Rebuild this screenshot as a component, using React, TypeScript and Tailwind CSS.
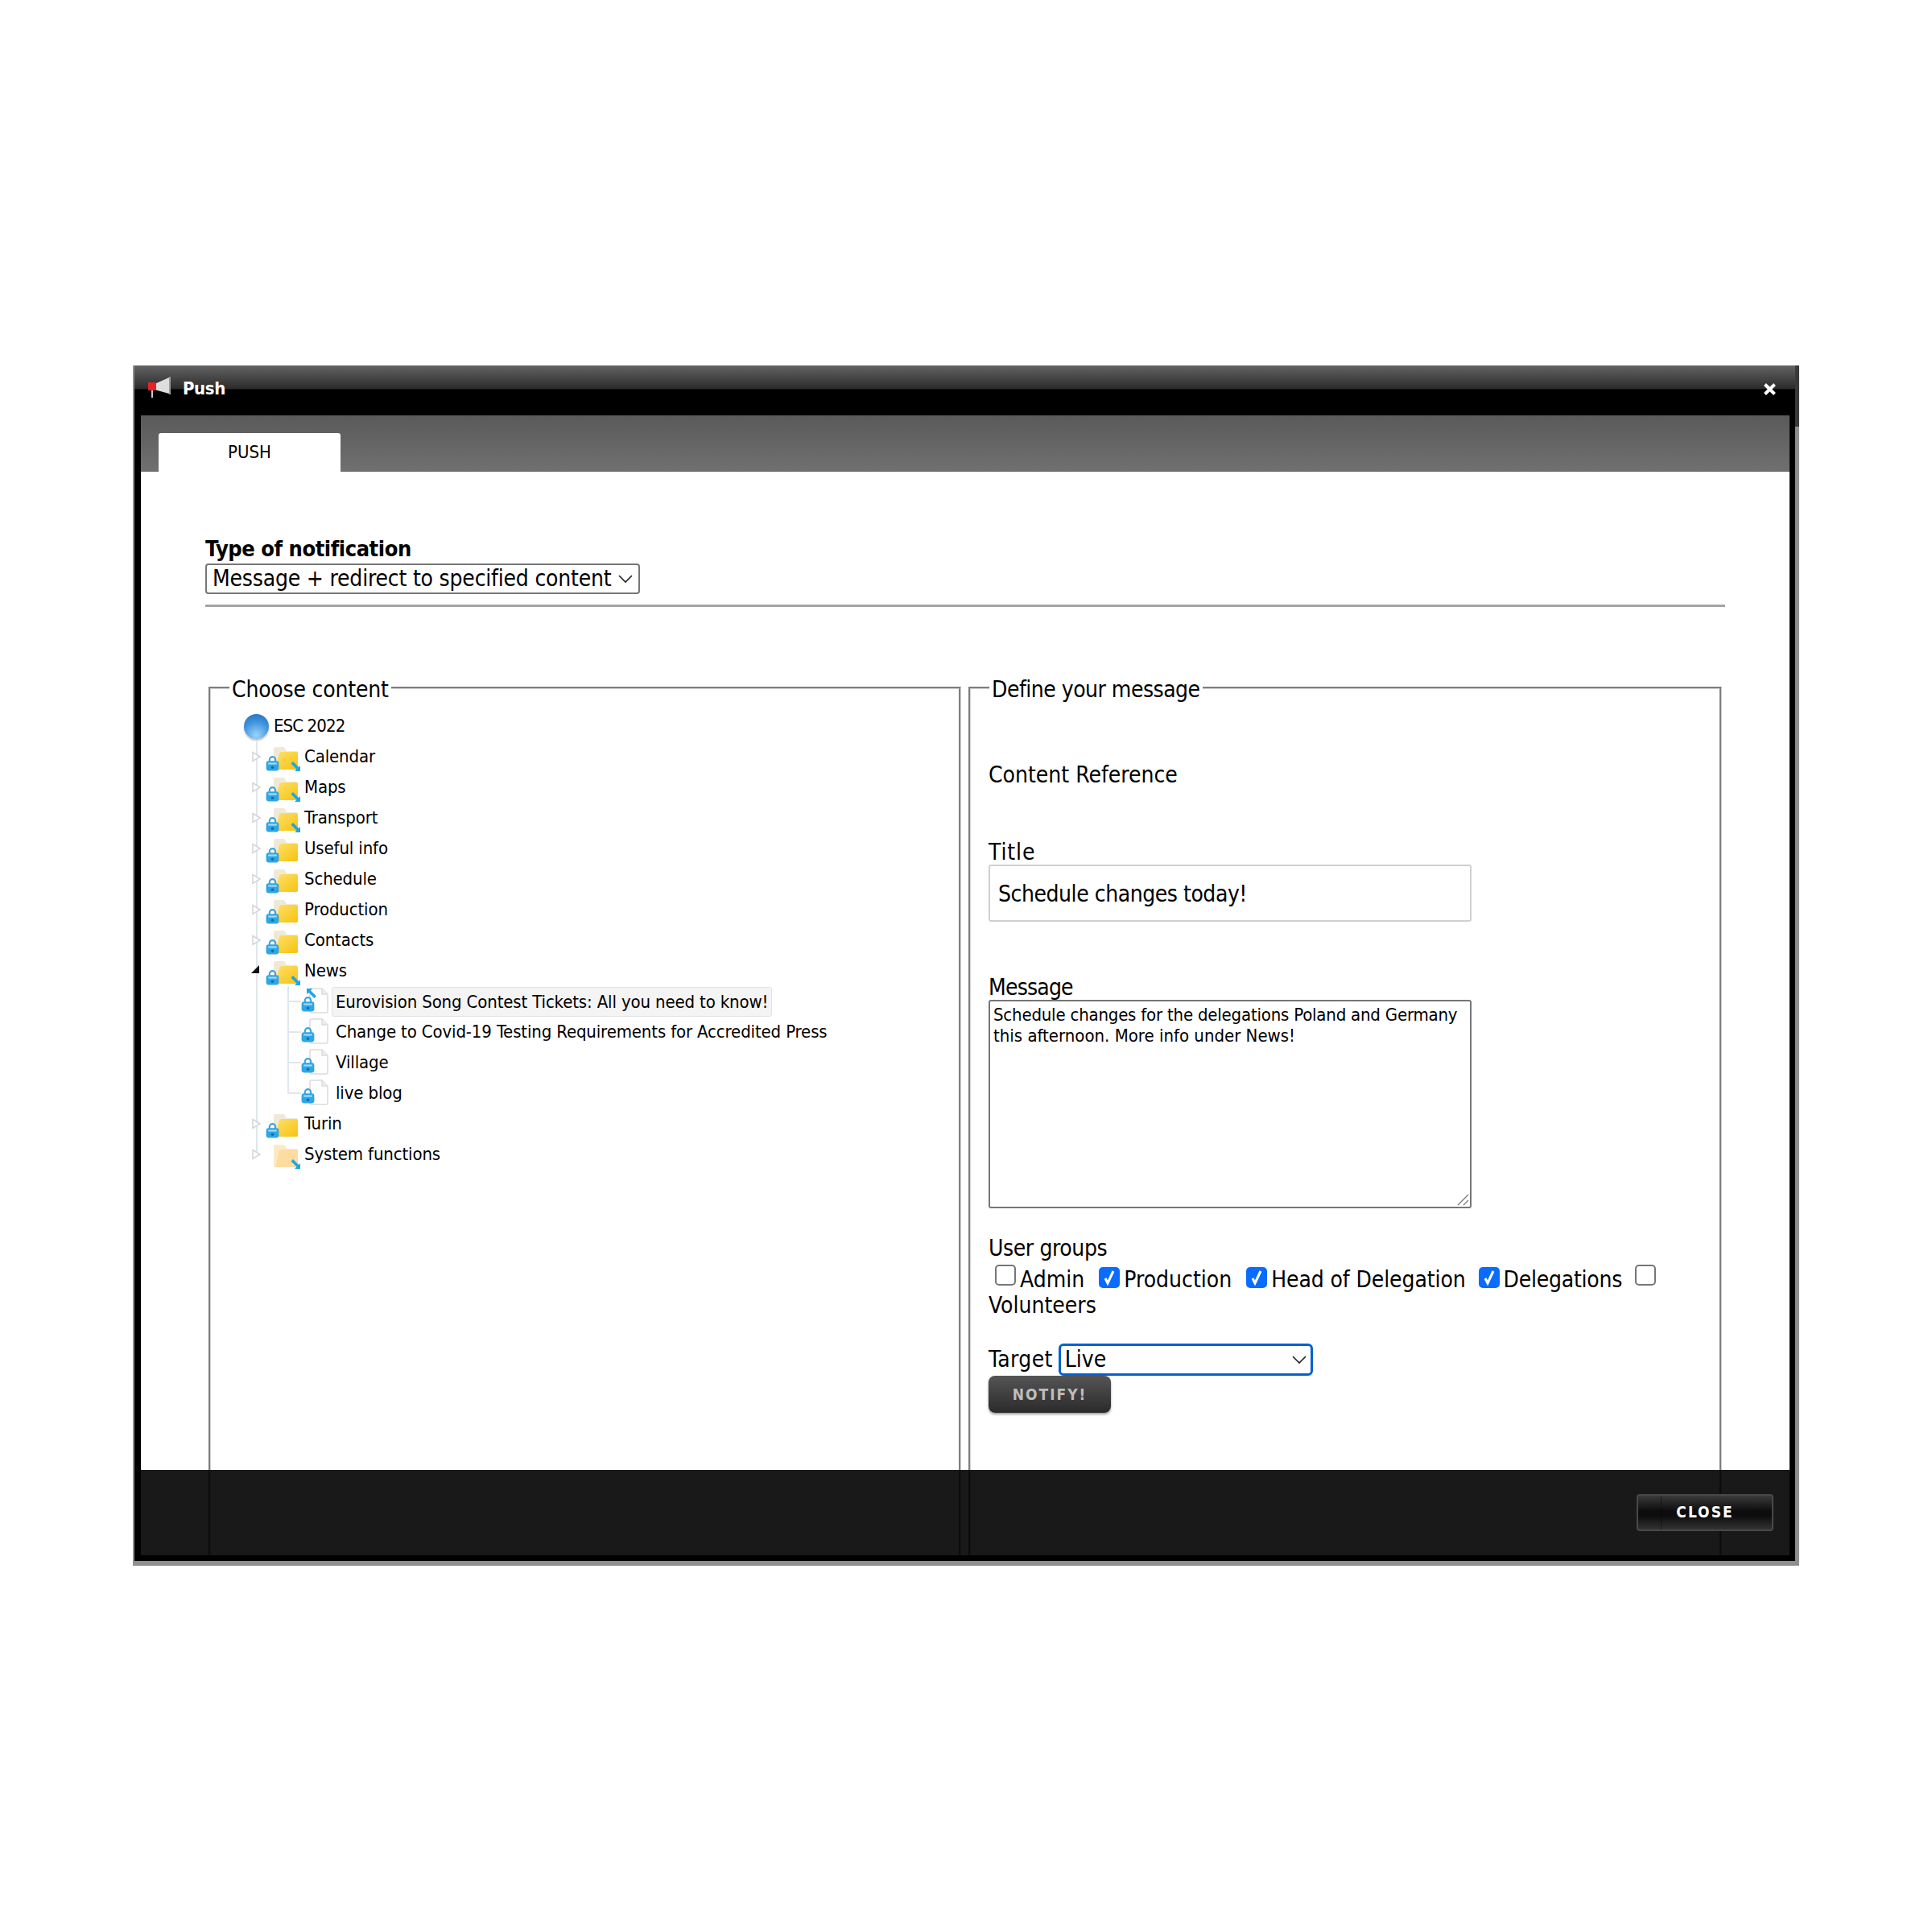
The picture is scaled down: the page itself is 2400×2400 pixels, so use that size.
const FONT = "font-['DejaVu_Sans_Condensed','DejaVu_Sans',sans-serif]"

function Lock({ bottom }: { bottom: string }) {
  return (
    <svg className={`absolute left-0 ${bottom}`} width="17" height="20" viewBox="0 0 16 19">
      <path d="M4.5 8V5.5a3.5 3.5 0 0 1 7 0V8" fill="none" stroke="#3aa4dc" strokeWidth="2" />
      <rect x="0.5" y="7" width="15" height="11.5" rx="3" fill="#2ea6e6" />
      <rect x="3" y="9" width="10" height="2" fill="#a5dcf7" />
      <circle cx="8" cy="14.5" r="1.7" fill="#0d6fa8" />
    </svg>
  )
}

function Arrow({ up }: { up?: boolean }) {
  return (
    <svg className={up ? 'absolute left-[6px] top-[2px]' : 'absolute left-[30px] bottom-0'} width="14" height="14" viewBox="0 0 14 14">
      {up
        ? <path d="M1 1h7L6 3.5l7 7-2.5 2.5-7-7L1 8z" fill="#19a7ea" />
        : <path d="M13 13H6l2.500-2.500-7-7L4 1l7 7 2-2z" fill="#19a7ea" />}
    </svg>
  )
}

function Folder({ lock = true, arrow, pale }: { lock?: boolean; arrow?: boolean; pale?: boolean }) {
  return (
    <span className="relative block w-[48px] h-[38px] shrink-0">
      <svg className="absolute left-[9px] top-[6px]" width="32" height="30" viewBox="0 0 32 30">
        <defs>
          <linearGradient id="fy" x1="0" y1="0" x2="1" y2="1">
            <stop offset="0" stopColor="#ffe06a" />
            <stop offset="1" stopColor="#f6c312" />
          </linearGradient>
        </defs>
        <path d="M1 8V3a2 2 0 0 1 2-2h11l3 5h12a2 2 0 0 1 2 2v19a2 2 0 0 1-2 2H3a2 2 0 0 1-2-2z" fill={pale ? '#fde9c6' : '#efe9d6'} />
        <path d="M3 29 8 9q.5-2 3-2h18a2 2 0 0 1 2 2v18a2 2 0 0 1-2 2z" fill={pale ? '#fcdca0' : 'url(#fy)'} />
      </svg>
      {lock && <Lock bottom="bottom-[1px]" />}
      {arrow && <Arrow />}
    </span>
  )
}

function Page({ arrow }: { arrow?: boolean }) {
  return (
    <span className="relative block w-[38px] h-[38px] shrink-0">
      <svg className="absolute left-[10px] top-[2px]" width="24" height="32" viewBox="0 0 24 32">
        <path d="M2 1h14l7 7v21a2 2 0 0 1-2 2H3a2 2 0 0 1-2-2V2z" fill="#fff" stroke="#dcdcdc" strokeWidth="1.5" />
        <path d="M16 1v7h7" fill="#eee" stroke="#dcdcdc" strokeWidth="1.5" />
      </svg>
      <Lock bottom="bottom-[6px]" />
      {arrow && <Arrow up />}
    </span>
  )
}

function Expander({ open }: { open?: boolean }) {
  return (
    <svg className="absolute left-[-18px] top-[12px]" width="14" height="14" viewBox="0 0 14 14">
      {open
        ? <path d="M0 10 10 0v10z" fill="#111" />
        : <path d="M2 1.500 11 7l-9 5.500z" fill="#fff" stroke="#cfd6da" strokeWidth="1.5" />}
    </svg>
  )
}

const FOLDERS = [
  { name: 'Calendar', arrow: true },
  { name: 'Maps', arrow: true },
  { name: 'Transport', arrow: true },
  { name: 'Useful info' },
  { name: 'Schedule' },
  { name: 'Production' },
  { name: 'Contacts' },
]

const NEWS = [
  'Eurovision Song Contest Tickets: All you need to know!',
  'Change to Covid-19 Testing Requirements for Accredited Press',
  'Village',
  'live blog',
]

function Tree() {
  return (
    <div className="ml-[19px] mt-[10px] text-[22px] leading-[38px] tracking-[-0.14px] text-black">
      <div className="flex items-center h-[38px]">
        <span className="block w-[31px] h-[31px] rounded-full bg-[radial-gradient(circle_at_50%_85%,#9ad4fa,#3f93dd_55%,#1f6cbc)] shadow-[0_2px_2px_rgba(0,0,0,.25)] shrink-0" />
        <span className="ml-[6px] tracking-[-0.9px]">ESC 2022</span>
      </div>
      <div className="ml-[15px] border-l-2 border-[#e1e7ea] pl-[10px] h-[513px]">
        {FOLDERS.map(f => (
          <div key={f.name} className="relative flex items-center h-[38px]">
            <Expander />
            <Folder arrow={f.arrow} />
            <span>{f.name}</span>
          </div>
        ))}
        <div className="relative flex items-center h-[38px]">
          <Expander open />
          <Folder arrow />
          <span>News</span>
        </div>
        {NEWS.map((n, i) => (
          <div key={n} className="relative flex items-center h-[38px] ml-[27px] pl-[17px]">
            <span className={i === 3 ? 'absolute left-0 top-0 w-[2px] h-[20px] bg-[#e1e7ea]' : 'absolute left-0 top-0 w-[2px] h-[38px] bg-[#e1e7ea]'} />
            <span className="absolute left-0 top-[18px] w-[17px] h-[2px] bg-[#e1e7ea]" />
            <Page arrow={i === 0} />
            <span className={i === 0 ? 'px-[4px] h-[37px] leading-[35px] bg-[#f4f4f4] border border-[#e3e3e3] rounded-[3px]' : 'ml-[1px] px-[4px]'}>{n}</span>
          </div>
        ))}
        <div className="relative flex items-center h-[38px]">
          <Expander />
          <Folder />
          <span>Turin</span>
        </div>
        <div className="relative flex items-center h-[38px]">
          <Expander />
          <Folder lock={false} arrow pale />
          <span>System functions</span>
        </div>
      </div>
    </div>
  )
}

function Check({ on }: { on?: boolean }) {
  return on ? (
    <span className="inline-flex items-center justify-center w-[26px] h-[26px] rounded-[5px] bg-[#0a6cff] align-[2px]">
      <svg width="18" height="20" viewBox="0 0 18 20"><path d="M4 11l3 6 7-15" fill="none" stroke="#fff" strokeWidth="3" /></svg>
    </span>
  ) : (
    <span className="inline-block w-[26px] h-[26px] rounded-[5px] border-2 border-[#767676] bg-white align-[2px]" />
  )
}

function Group({ label, on, gap, track }: { label: string; on?: boolean; gap: string; track?: string }) {
  return (
    <>
      <span className={gap}><Check on={on} /></span>
      <span className={`ml-[5px] ${track ?? ''}`}>{label}</span>{' '}
    </>
  )
}

export default function App() {
  return (
    <div className={`${FONT} h-[2400px] bg-white pt-[454px] pl-[165px]`}>
      <div className="relative w-[2070px] h-[1491px] bg-black border-l-[2px] border-r-[5px] border-b-[6px] border-[#8f8f8f]">
        {/* Top of the right edge is darker */}
        <div className="absolute right-[-5px] top-0 w-[5px] h-[76px] bg-[#3a3a3a]" />

        {/* Title bar */}
        <div className="h-[62px] bg-[linear-gradient(#636363,#2b2b2b_47%,#000_48%)] flex items-start pt-[14px] pl-[16px] pr-[24px]">
          <svg width="30" height="28" viewBox="0 0 30 28">
            <path d="M9 9 27 1v20L9 16z" fill="#dedede" />
            <path d="M27 0h2v22h-2z" fill="#9a9a9a" />
            <rect x="1" y="7" width="10" height="10" rx="1" fill="#e2232a" />
            <path d="M6 17v9" stroke="#ccc" strokeWidth="2" />
          </svg>
          <span className="ml-[14px] text-[22px] leading-[30px] font-bold tracking-[-0.4px] text-white">Push</span>
          <svg className="ml-auto mt-[8px]" width="15" height="15" viewBox="0 0 15 15">
            <path d="M1.500 1.500l12 12M13.500 1.500l-12 12" stroke="#fff" strokeWidth="4" />
          </svg>
        </div>

        <div className="relative ml-[8px] mr-[7px] h-[1423px] bg-white overflow-hidden">
          {/* Tab strip */}
          <div className="h-[70px] bg-[linear-gradient(#5a5a5a,#707070)] pt-[22px] pl-[22px]">
            <div className="w-[226px] h-[48px] bg-white rounded-t-[3px] text-center text-[22px] leading-[48px] text-black">PUSH</div>
          </div>

          <div className="px-[80px] pt-[80px]">
            <div className="text-[27px] leading-[32px] font-bold tracking-[-0.45px] text-black">Type of notification</div>
            <div className="flex items-center w-[540px] h-[38px] mt-[2px] border-2 border-[#767676] rounded-[4px] px-[7px] text-[28px] tracking-[-0.2px] text-black">
              Message + redirect to specified content
              <svg className="ml-auto" width="18" height="12" viewBox="0 0 18 12"><path d="M1 2l8 8 8-8" fill="none" stroke="#222" strokeWidth="1.6" /></svg>
            </div>
            <div className="h-[3px] mt-[13px] w-[1888px] bg-[#a3a3a3]" />

            <div className="flex gap-[9px] mt-[81px] ml-[4px]">
              <fieldset className="w-[935px] h-[1100px] border-[3px] [border-style:groove] border-[#d2d2d2] pl-[22px]">
                <legend className="ml-[1px] px-[3px] pt-[6px] text-[28px] leading-[32px] tracking-[-0.2px] text-black">Choose content</legend>
                <Tree />
              </fieldset>

              <fieldset className="w-[936px] h-[1100px] border-[3px] [border-style:groove] border-[#d2d2d2] pl-[22px] text-[28px] text-black">
                <legend className="ml-[1px] px-[3px] pt-[6px] leading-[32px] tracking-[-0.5px]">Define your message</legend>
                <div className="mt-[74px] leading-[32px]">Content Reference</div>
                <div className="mt-[64px] leading-[32px] tracking-[0.9px]">Title</div>
                <div className="w-[600px] h-[71px] border-2 border-[#d0d0d0] rounded-[3px] px-[10px] leading-[70px] tracking-[-0.45px] -mt-[1px]">Schedule changes today!</div>
                <div className="mt-[66px] leading-[32px] tracking-[-0.8px]">Message</div>
                <div className="relative w-[600px] h-[259px] border-2 border-[#767676] rounded-[3px] px-[4px] py-[4px] text-[22px] leading-[26px] tracking-[-0.2px] -mt-[1px]">
                  Schedule changes for the delegations Poland and Germany<br /><span className="tracking-[0px]">this afternoon. More info under News!</span>
                  <svg className="absolute right-[1px] bottom-[1px]" width="16" height="16" viewBox="0 0 16 16"><path d="M2 15 15 2M9 15l6-6" stroke="#777" strokeWidth="1.3" /></svg>
                </div>
                <div className="mt-[34px] leading-[32px] tracking-[-0.4px]">User groups</div>
                <div className="leading-[32px] w-[860px] pt-[4px]">
                  <Group label="Admin" gap="ml-[8px]" />
                  <Group label="Production" on gap="ml-[10px]" />
                  <Group label="Head of Delegation" on gap="ml-[10px]" track="tracking-[-0.1px]" />
                  <Group label="Delegations" on gap="ml-[8px]" track="tracking-[-0.25px]" />
                  <span className="ml-[8px]"><Check /></span> Volunteers
                </div>
                <div className="flex items-center mt-[31px] h-[40px]">
                  <span className="tracking-[0.4px]">Target</span>
                  <div className="flex items-center ml-[7px] w-[316px] h-[40px] border-[3px] border-[#0561d1] rounded-[6px] px-[5px]">
                    Live
                    <svg className="ml-auto" width="18" height="12" viewBox="0 0 18 12"><path d="M1 2l8 8 8-8" fill="none" stroke="#222" strokeWidth="1.6" /></svg>
                  </div>
                </div>
                <div className="w-[152px] h-[46px] rounded-[8px] bg-[linear-gradient(#555,#2a2a2a)] shadow-[0_2px_3px_rgba(0,0,0,.4)] text-center text-[19px] leading-[46px] font-bold tracking-[2px] text-[#bdbdbd]">NOTIFY!</div>
              </fieldset>
            </div>
          </div>

          {/* Footer sits over the fieldsets, their lines show through */}
          <div className="absolute left-0 right-0 bottom-[7px] h-[106px] bg-black/90 flex items-start justify-end pt-[30px] pr-[20px]">
            <div className="relative w-[170px] h-[46px] rounded-[4px] border-2 border-[#484848] bg-[linear-gradient(#3a3a3a,#0d0d0d_45%,#0d0d0d_60%,#333)] text-center text-[19px] leading-[40px] font-bold tracking-[2px] text-white">
              <span className="absolute left-[28px] top-0 w-[1px] h-[42px] bg-black/40" />
              CLOSE
            </div>
          </div>
          <div className="absolute left-0 right-0 bottom-0 h-[7px] bg-black" />
        </div>
      </div>
    </div>
  )
}
